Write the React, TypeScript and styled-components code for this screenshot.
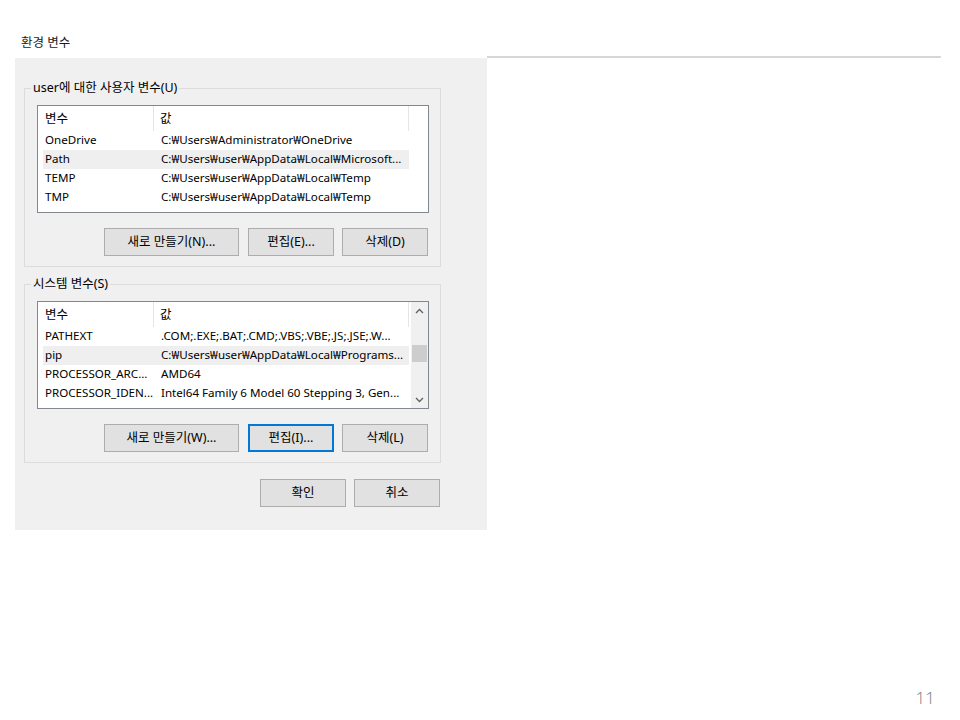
import React, { ReactElement } from 'react'
import styled, { createGlobalStyle } from 'styled-components'

const GlobalStyle = createGlobalStyle`
  html, body {
    margin: 0;
    padding: 0;
    background: #ffffff;
  }
  body {
    font-family: 'Noto Sans', 'Noto Sans CJK KR', sans-serif;
  }
`

const UI_FONT = `'Noto Sans', 'Noto Sans CJK KR', sans-serif`

const Slide = styled.div`
  width: 960px;
  height: 720px;
  display: flex;
  flex-direction: column;
  box-sizing: border-box;
  background: #ffffff;
`

const SlideTitle = styled.div`
  margin: 35px 0 0 21px;
  font-family: ${UI_FONT};
  font-size: 12.5px;
  line-height: 16px;
  color: #1a1a1a;
`

const TopRow = styled.div`
  display: flex;
  align-items: flex-start;
  margin: 5px 19px 0 15px;
`

const Rule = styled.div`
  flex: 1;
  height: 2px;
  background: #d6d6d6;
`

const Dialog = styled.div`
  width: 472px;
  margin-top: 2px;
  box-sizing: border-box;
  padding: 22px 46px 23px 9px;
  background: #f0f0f0;
  display: flex;
  flex-direction: column;
  font-family: ${UI_FONT};
  font-size: 12px;
  color: #000000;
`

const Group = styled.fieldset<{ $gapTop?: number }>`
  margin: ${p => p.$gapTop ?? 0}px 0 0 0;
  padding: 9px 11px 10px 12px;
  border: 1px solid #dcdcdc;
  min-inline-size: 0;
  display: flex;
  flex-direction: column;
`

const Legend = styled.legend`
  margin-left: -6px;
  padding: 0 2px;
  font-size: 12.5px;
  line-height: 16px;
  color: #000000;
`

const ListBox = styled.div`
  height: 108px;
  box-sizing: border-box;
  border: 1px solid #828790;
  background: #ffffff;
  display: flex;
  overflow: hidden;
`

const ListBody = styled.div`
  flex: 1;
  display: flex;
  flex-direction: column;
  padding-left: 5px;
  min-width: 0;
`

const Columns = `
  display: grid;
  grid-template-columns: 111px 255px;
  width: 366px;
`

const HeaderRow = styled.div`
  ${Columns}
  height: 25px;
  align-items: stretch;
`

const HeaderCell = styled.div<{ $first?: boolean }>`
  display: flex;
  align-items: center;
  padding-left: ${p => (p.$first ? 2 : 6)}px;
  border-right: 1px solid #e5e5e5;
  font-size: 12.5px;
  line-height: 16px;
`

const Row = styled.div<{ $selected?: boolean }>`
  ${Columns}
  height: 19px;
  align-items: center;
  background: ${p => (p.$selected ? '#efefef' : 'transparent')};
`

const Cell = styled.div<{ $first?: boolean }>`
  padding-left: ${p => (p.$first ? 2 : 7)}px;
  white-space: nowrap;
  overflow: hidden;
  font-size: 11.6px;
  line-height: 16px;
  margin-top: -1px;
`

const ScrollBar = styled.div<{ $blank?: boolean }>`
  width: 17px;
  flex: none;
  background: ${p => (p.$blank ? '#ffffff' : '#f0f0f0')};
  display: flex;
  flex-direction: column;
  align-items: center;
`

const ScrollArrow = styled.div`
  width: 17px;
  height: 17px;
  display: flex;
  align-items: center;
  justify-content: center;
`

const ScrollTrack = styled.div`
  flex: 1;
  width: 100%;
  padding-top: 26px;
  box-sizing: border-box;
  display: flex;
  justify-content: center;
`

const ScrollThumb = styled.div`
  width: 15px;
  height: 17px;
  background: #cdcdcd;
`

const ButtonRow = styled.div<{ $top: number }>`
  display: flex;
  justify-content: flex-end;
  gap: 8px;
  margin: ${p => p.$top}px 1px 0 0;
`

const WinButton = styled.button<{ $width: number; $focused?: boolean; $gapRight?: number }>`
  width: ${p => p.$width}px;
  height: 28px;
  box-sizing: border-box;
  margin: 0 ${p => p.$gapRight ?? 0}px 0 0;
  padding: 0;
  background: #e1e1e1;
  border: ${p => (p.$focused ? '2px solid #0078d7' : '1px solid #adadad')};
  font-family: ${UI_FONT};
  font-size: 12.5px;
  color: #000000;
  line-height: 16px;
`

const Footer = styled.div`
  margin-top: auto;
  padding: 0 25px 12px 0;
  text-align: right;
  font-family: 'Open Sans', 'Noto Sans', sans-serif;
  font-size: 17px;
  line-height: 20px;
  font-weight: 300;
  color: #7a7a7a;
`

type EnvVar = { name: string; value: string }

const userVars: EnvVar[] = [
  { name: 'OneDrive', value: 'C:₩Users₩Administrator₩OneDrive' },
  { name: 'Path', value: 'C:₩Users₩user₩AppData₩Local₩Microsoft...' },
  { name: 'TEMP', value: 'C:₩Users₩user₩AppData₩Local₩Temp' },
  { name: 'TMP', value: 'C:₩Users₩user₩AppData₩Local₩Temp' },
]

const systemVars: EnvVar[] = [
  { name: 'PATHEXT', value: '.COM;.EXE;.BAT;.CMD;.VBS;.VBE;.JS;.JSE;.W...' },
  { name: 'pip', value: 'C:₩Users₩user₩AppData₩Local₩Programs...' },
  { name: 'PROCESSOR_ARC...', value: 'AMD64' },
  { name: 'PROCESSOR_IDEN...', value: 'Intel64 Family 6 Model 60 Stepping 3, Gen...' },
]

const Chevron = ({ up }: { up?: boolean }): ReactElement => (
  <svg width='9' height='6' viewBox='0 0 9 6'>
    <polyline
      points={up ? '1,5 4.5,1.5 8,5' : '1,1 4.5,4.5 8,1'}
      fill='none'
      stroke='#606060'
      strokeWidth='1.3'
    />
  </svg>
)

type VarListProps = {
  vars: EnvVar[]
  selected: number
  scroll?: boolean
}

const VarList = ({ vars, selected, scroll }: VarListProps): ReactElement => (
  <ListBox>
    <ListBody>
      <HeaderRow>
        <HeaderCell $first>변수</HeaderCell>
        <HeaderCell>값</HeaderCell>
      </HeaderRow>
      {vars.map((v, i) => (
        <Row key={v.name} $selected={i === selected}>
          <Cell $first>{v.name}</Cell>
          <Cell>{v.value}</Cell>
        </Row>
      ))}
    </ListBody>
    {scroll ? (
      <ScrollBar>
        <ScrollArrow>
          <Chevron up />
        </ScrollArrow>
        <ScrollTrack>
          <ScrollThumb />
        </ScrollTrack>
        <ScrollArrow>
          <Chevron />
        </ScrollArrow>
      </ScrollBar>
    ) : (
      <ScrollBar $blank />
    )}
  </ListBox>
)

const App = (): ReactElement => (
  <Slide>
    <GlobalStyle />
    <SlideTitle>환경 변수</SlideTitle>
    <TopRow>
      <Dialog>
        <Group>
          <Legend>user에 대한 사용자 변수(U)</Legend>
          <VarList vars={userVars} selected={1} />
          <ButtonRow $top={15}>
            <WinButton $width={135} $gapRight={1}>
              새로 만들기(N)...
            </WinButton>
            <WinButton $width={86}>편집(E)...</WinButton>
            <WinButton $width={86}>삭제(D)</WinButton>
          </ButtonRow>
        </Group>

        <Group $gapTop={9}>
          <Legend>시스템 변수(S)</Legend>
          <VarList vars={systemVars} selected={1} scroll />
          <ButtonRow $top={15}>
            <WinButton $width={135} $gapRight={1}>
              새로 만들기(W)...
            </WinButton>
            <WinButton $width={86} $focused>
              편집(I)...
            </WinButton>
            <WinButton $width={86}>삭제(L)</WinButton>
          </ButtonRow>
        </Group>

        <ButtonRow $top={16}>
          <WinButton $width={86}>확인</WinButton>
          <WinButton $width={86}>취소</WinButton>
        </ButtonRow>
      </Dialog>
      <Rule />
    </TopRow>
    <Footer>11</Footer>
  </Slide>
)

export default App
